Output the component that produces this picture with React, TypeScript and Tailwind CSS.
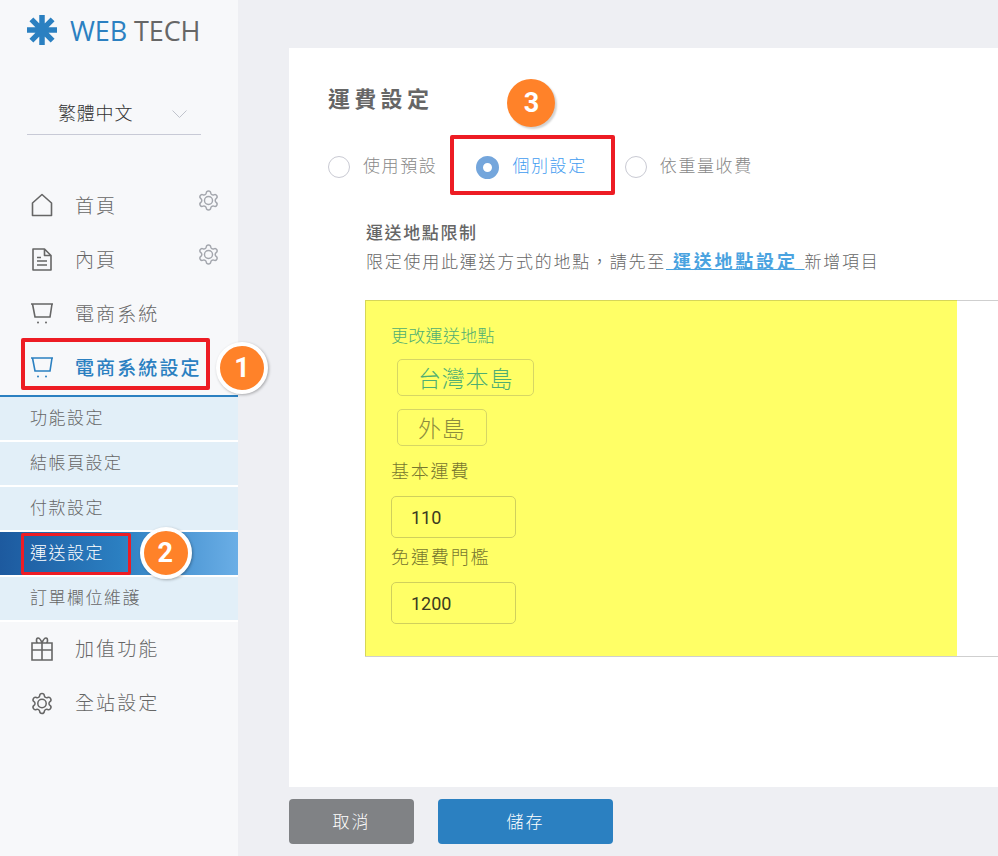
import React from "react";

const CJK = "font-['Noto_Sans_CJK_TC','Liberation_Sans',sans-serif]";

function Home() {
  return (
    <svg width="22" height="24" viewBox="0 0 22 24" fill="none" stroke="currentColor" strokeWidth="1.6" strokeLinejoin="round">
      <path d="M1.500 10 11 1.500l9.500 8.500v12.500h-19z" />
    </svg>
  );
}
function Doc() {
  return (
    <svg width="20" height="23" viewBox="0 0 20 23" fill="none" stroke="currentColor" strokeWidth="1.6" strokeLinejoin="round">
      <path d="M1 1h11.500L19 7.500V22H1zM12.500 1v6.500H19M5 9.500h4M5 13h10M5 17h10" />
    </svg>
  );
}
function Cart() {
  return (
    <svg width="22" height="21" viewBox="0 0 22 21" fill="none" stroke="currentColor" strokeWidth="1.6">
      <path d="M0 1h22M1.500 1 4 14h15l2-13" />
      <circle cx="7" cy="19.500" r="1" fill="currentColor" stroke="none" />
      <circle cx="15" cy="19.500" r="1" fill="currentColor" stroke="none" />
    </svg>
  );
}
function Gift() {
  return (
    <svg width="22" height="24" viewBox="0 0 22 24" fill="none" stroke="currentColor" strokeWidth="1.6">
      <path d="M1 6h20v17H1zM1 13h20M11 6v17M11 6C9.500 2 8.500 1 7 1 5 1 5 6 7 6M11 6c1.500-4 2.500-5 4-5 2 0 2 5 0 5" />
    </svg>
  );
}
function Gear({ size, className = "", strokeWidth = 1.5 }: { size: number; className?: string; strokeWidth?: number }) {
  return (
    <svg width={size} height={size} viewBox="0 0 24 24" fill="none" stroke="currentColor" strokeWidth={strokeWidth} strokeLinejoin="round" className={className}>
      <path d="M9.671 4.136a2.34 2.34 0 0 1 4.659 0 2.34 2.34 0 0 0 3.319 1.915 2.34 2.34 0 0 1 2.33 4.033 2.34 2.34 0 0 0 0 3.831 2.34 2.34 0 0 1-2.33 4.033 2.34 2.34 0 0 0-3.319 1.915 2.34 2.34 0 0 1-4.659 0 2.34 2.34 0 0 0-3.32-1.915 2.34 2.34 0 0 1-2.33-4.033 2.34 2.34 0 0 0 0-3.831A2.34 2.34 0 0 1 6.35 6.051a2.34 2.34 0 0 0 3.319-1.915" />
      <circle cx="12" cy="12" r="4.200" />
    </svg>
  );
}
function Chevron() {
  return (
    <svg width="15" height="8" viewBox="0 0 15 8" fill="none" stroke="#c0c3cc" strokeWidth="1" className="ml-auto mr-[14px] mt-[3px]">
      <path d="M0.500 0.500 7.500 7.500 14.500 0.500" />
    </svg>
  );
}
function Logo() {
  return (
    <svg width="30" height="30" viewBox="0 0 30 30" stroke="#2b80c1" strokeWidth="5.500" className="shrink-0">
      <path d="M15 0v30M0 15h30M4.400 4.400l21.200 21.200M25.600 4.400 4.400 25.600" />
    </svg>
  );
}
function Badge({ n, className }: { n: string; className: string }) {
  return (
    <div className={`absolute flex h-[52px] w-[52px] items-center justify-center rounded-full bg-[#ff8229] border-[4px] border-white text-[27px] font-bold text-white shadow-[1px_1px_3px_rgba(0,0,0,0.3)] font-['Roboto',sans-serif] ${className}`}>
      {n}
    </div>
  );
}
function NavRow({ icon, label, gear, lift }: { icon: React.ReactNode; label: string; gear?: boolean; lift?: boolean }) {
  return (
    <div className="flex h-[54px] items-center pl-[30px] pr-[18px] text-[#666]">
      <div className="flex w-[24px] justify-center">{icon}</div>
      <span className={`ml-[21px] text-[19px] tracking-[2.100px] font-light ${lift ? "pb-[2px]" : ""}`}>{label}</span>
      {gear && <Gear size={23} strokeWidth={1.5} className="ml-auto mb-[10px] text-[#a3a6ad]" />}
    </div>
  );
}
function SubRow({ label }: { label: string }) {
  return (
    <div className="flex h-[45px] items-center border-b-2 border-white bg-[#e2eff8] pb-[3px] pl-[30px] text-[17px] tracking-[1.500px] text-[#666] font-light">
      {label}
    </div>
  );
}
function Radio({ label, active, className = "" }: { label: string; active?: boolean; className?: string }) {
  return (
    <div className={`flex items-center ${className}`}>
      {active ? (
        <span className="h-[23px] w-[23px] rounded-full border-[7px] border-[#74a6dc] bg-white" />
      ) : (
        <span className="h-[22px] w-[22px] rounded-full border border-[#c9cad3] bg-white" />
      )}
      <span className={`ml-[13px] pb-[4px] text-[17px] tracking-[1.600px] font-light ${active ? "text-[#3f9cf0]" : "text-[#888]"}`}>{label}</span>
    </div>
  );
}
function Chip({ label, green }: { label: string; green?: boolean }) {
  return (
    <div className={`ml-[6px] flex h-[37px] w-fit items-center rounded-[5px] border border-[#d6d664] px-[20px] pb-[1px] text-[23px] tracking-[0.800px] font-light ${green ? "text-[#4fae72]" : "text-[#8c8c3e]"}`}>
      {label}
    </div>
  );
}

export default function App() {
  return (
    <div className={`flex h-screen w-full overflow-hidden bg-[#eeeff3] ${CJK}`}>
      <aside className="w-[238px] shrink-0 bg-[#f7f8fa]">
        <div className="flex h-[60px] items-center pl-[27px]">
          <Logo />
          <span className="ml-[13px] whitespace-nowrap font-['Open_Sans',sans-serif] text-[27px] font-medium leading-none text-[#2b80c1] tracking-[-0.100px]">
            WEB <span className="text-[#666]">TECH</span>
          </span>
        </div>
        <div className="ml-[27px] mt-[32px] flex h-[43px] w-[174px] items-center border-b border-[#c8cad6] pb-[2px] pl-[31px] text-[18px] tracking-[0.800px] text-[#333] font-light">
          繁體中文
          <Chevron />
        </div>
        <div className="mt-[43px]">
          <NavRow icon={<Home />} label="首頁" gear />
          <NavRow icon={<Doc />} label="內頁" gear />
          <NavRow icon={<Cart />} label="電商系統" />
          <div className="relative">
            <div className="flex h-[54px] items-center pl-[30px] pr-[20px] text-[#2b80c1]">
              <div className="flex w-[24px] justify-center"><Cart /></div>
              <span className="ml-[21px] whitespace-nowrap text-[19px] font-medium tracking-[2.100px]">電商系統設定</span>
            </div>
            <div className="absolute left-[21px] top-[-2px] h-[52px] w-[189px] rounded-[2px] border-[4px] border-[#ed1c24]" />
            <Badge n="1" className="left-[216px] top-[2px]" />
          </div>
          <div className="mt-[1px] h-[2px] bg-[#2b80c1]" />
          <SubRow label="功能設定" />
          <SubRow label="結帳頁設定" />
          <SubRow label="付款設定" />
          <div className="relative flex h-[45px] items-center border-b-2 border-white bg-gradient-to-r from-[#1d5a9f] via-[#2b7fc1] to-[#6aaee6] pb-[3px] pl-[30px] text-[17px] tracking-[1.500px] text-white font-light">
            運送設定
            <div className="absolute left-[21px] top-[1px] h-[42px] w-[110px] rounded-[2px] border-[3px] border-[#ed1c24]" />
            <Badge n="2" className="left-[140px] top-[-5px]" />
          </div>
          <SubRow label="訂單欄位維護" />
          <NavRow icon={<Gift />} label="加值功能" lift />
          <NavRow icon={<Gear size={29} strokeWidth={1.5} />} label="全站設定" lift />
        </div>
      </aside>
      <main className="flex min-w-0 flex-1 flex-col pl-[51px] pt-[48px]">
        <section className="flex-1 overflow-hidden bg-white pl-[39px] pt-[35px]">
          <h1 className="h-[28px] text-[22px] font-bold leading-[28px] tracking-[4.300px] text-[#666]">運費設定</h1>
          <div className="mt-[36px] flex h-[40px] items-center">
            <Radio label="使用預設" />
            <div className="relative ml-[39px] flex">
              <Radio label="個別設定" active />
              <div className="absolute left-[-26px] top-[-17px] h-[60px] w-[165px] rounded-[2px] border-[4px] border-[#ed1c24]" />
              <div className="absolute left-[31px] top-[-73px] flex h-[48px] w-[48px] items-center justify-center rounded-full bg-[#ff8229] text-[27px] font-bold text-white shadow-[2px_2px_2px_rgba(0,0,0,0.18)] font-['Roboto',sans-serif]">3</div>
            </div>
            <Radio label="依重量收費" className="ml-[38px]" />
          </div>
          <div className="ml-[38px] mt-[30px] text-[17px] leading-[29px] text-[#666]">
            <div className="font-medium tracking-[1.600px]">運送地點限制</div>
            <div className="whitespace-nowrap font-light tracking-[1.750px]">
              限定使用此運送方式的地點，請先至<a className="text-[18px] font-bold tracking-[2.800px] text-[#4aa3e0] underline" href="#"> 運送地點設定 </a>新增項目
            </div>
          </div>
          <div className="ml-[37px] mt-[25px] h-[357px] border-y border-[#cfcfcf]">
            <div className="-mt-px h-[356px] w-[592px] border-t border-l border-[#d6d658] bg-[#ffff66] pl-[25px] pt-[22px] font-light">
              <div className="h-[24px] text-[17px] leading-[24px] tracking-[0.300px] text-[#4fae72]">更改運送地點</div>
              <div className="mt-[12px]"><Chip label="台灣本島" green /></div>
              <div className="mt-[13px]"><Chip label="外島" /></div>
              <div className="mt-[12px] h-[24px] text-[18px] leading-[24px] tracking-[1.800px] text-[#77772f]">基本運費</div>
              <input readOnly value="110" className="mt-[14px] block h-[42px] w-[125px] rounded-[5px] border border-[#d0d05c] bg-transparent pl-[19px] font-['Roboto',sans-serif] text-[18px] font-normal text-[#3a3a20] outline-none" />
              <div className="mt-[6px] h-[24px] text-[18px] leading-[24px] tracking-[1.900px] text-[#77772f]">免運費門檻</div>
              <input readOnly value="1200" className="mt-[14px] block h-[42px] w-[125px] rounded-[5px] border border-[#d0d05c] bg-transparent pl-[19px] font-['Roboto',sans-serif] text-[18px] font-normal text-[#3a3a20] outline-none" />
            </div>
          </div>
        </section>
        <footer className="flex h-[69px] shrink-0 gap-[24px] pt-[12px]">
          <button className="h-[45px] w-[125px] rounded-[4px] bg-[#808285] pb-[2px] text-[17px] tracking-[2px] text-white font-light">取消</button>
          <button className="h-[45px] w-[175px] rounded-[4px] bg-[#2b80c1] pb-[2px] text-[17px] tracking-[2px] text-white font-light">儲存</button>
        </footer>
      </main>
    </div>
  );
}
